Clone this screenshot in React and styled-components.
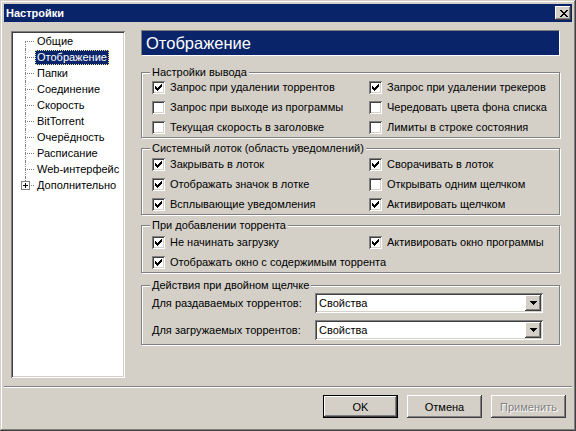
import React from 'react';
import styled, { createGlobalStyle } from 'styled-components';

const GlobalStyle = createGlobalStyle`
    html, body {
        margin: 0;
        padding: 0;
        background: #D4D0C8;
    }
    body {
        font-family: "Liberation Sans", Arial, sans-serif;
        font-size: 11px;
        color: #000;
    }
`;

const Window = styled.div`
    width: 576px;
    height: 431px;
    box-sizing: border-box;
    padding: 4px;
    background: #D4D0C8;
    box-shadow: inset -1px -1px 0 #404040, inset 1px 1px 0 #D4D0C8,
        inset -2px -2px 0 #808080, inset 2px 2px 0 #fff;
    display: flex;
    flex-direction: column;
`;

const TitleBar = styled.div`
    height: 18px;
    background: #0A246A;
    display: flex;
    align-items: center;
    justify-content: space-between;
    padding: 0 1px 0 2px;
    color: #fff;
    font-weight: bold;
    font-size: 11px;
`;

const RaisedBox = styled.div`
    background: #D4D0C8;
    box-shadow: inset -1px -1px 0 #404040, inset 1px 1px 0 #fff,
        inset -2px -2px 0 #808080, inset 2px 2px 0 #D4D0C8;
    display: flex;
    align-items: center;
    justify-content: center;
`;

const CloseButton = styled(RaisedBox)`
    width: 16px;
    height: 14px;
    box-sizing: border-box;
    padding-left: 1px;
`;

const Body = styled.div`
    height: 356px;
    box-sizing: border-box;
    padding: 8px 0 0 7px;
    display: flex;
    align-items: flex-start;
`;

const Tree = styled.div`
    margin-top: 1px;
    width: 114px;
    height: 347px;
    box-sizing: border-box;
    padding: 2px;
    background: #fff;
    box-shadow: inset 1px 1px 0 #808080, inset -1px -1px 0 #fff,
        inset 2px 2px 0 #404040, inset -2px -2px 0 #D4D0C8;
`;

const TreeRow = styled.div`
    display: flex;
    align-items: center;
    height: 16px;
`;

const Connector = styled.span`
    position: relative;
    width: 22px;
    height: 16px;
    flex: none;

    &::before {
        content: '';
        position: absolute;
        left: 12px;
        top: 8px;
        width: 9px;
        border-top: 1px dotted #808080;
    }

    &::after {
        content: '';
        position: absolute;
        left: 12px;
        top: ${p => (p.$first ? '8px' : '0')};
        height: ${p => (p.$last ? '4px' : p.$first ? '8px' : '16px')};
        border-left: 1px dotted #808080;
    }
`;

const Expander = styled.span`
    position: absolute;
    left: 8px;
    top: 4px;
    width: 9px;
    height: 9px;
    box-sizing: border-box;
    border: 1px solid #808080;
    background: #fff;
    z-index: 1;

    &::before {
        content: '';
        position: absolute;
        left: 1px;
        top: 3px;
        width: 5px;
        height: 1px;
        background: #000;
    }

    &::after {
        content: '';
        position: absolute;
        left: 3px;
        top: 1px;
        width: 1px;
        height: 5px;
        background: #000;
    }
`;

const TreeLabel = styled.span`
    height: 15px;
    line-height: 13px;
    box-sizing: border-box;
    padding: 0 1px;
    border: 1px ${p => (p.$selected ? 'dotted #E8E4A0' : 'solid transparent')};
    background: ${p => (p.$selected ? '#0A246A' : 'transparent')};
    color: ${p => (p.$selected ? '#fff' : '#000')};
    white-space: nowrap;
`;

const Panel = styled.div`
    margin-left: 16px;
    width: 419px;
    display: flex;
    flex-direction: column;
`;

const Header = styled.div`
    height: 26px;
    box-sizing: border-box;
    background: #0A246A;
    border-top: 1px solid #808080;
    border-left: 1px solid #808080;
    border-right: 1px solid #fff;
    border-bottom: 1px solid #fff;
    color: #fff;
    font-size: 16.5px;
    line-height: 24px;
    padding-left: 4px;
`;

const Group = styled.div`
    position: relative;
    margin-top: ${p => p.$mt}px;
    border: 1px solid #808080;
    box-shadow: inset 1px 1px 0 #fff, 1px 1px 0 #fff;
    padding: ${p => p.$pt}px 0 ${p => p.$pb || 0}px 10px;
`;

const Legend = styled.span`
    position: absolute;
    top: -7px;
    left: 8px;
    padding: 0 2px;
    line-height: 13px;
    background: #D4D0C8;
`;

const CheckGrid = styled.div`
    display: grid;
    grid-template-columns: 217px 1fr;
    grid-auto-rows: 20px;
`;

const CheckItem = styled.label`
    display: flex;
    align-items: center;
    gap: 5px;
    white-space: nowrap;
    grid-column: ${p => (p.$wide ? '1 / -1' : 'auto')};
`;

const Box = styled.span`
    width: 13px;
    height: 13px;
    box-sizing: border-box;
    flex: none;
    background: #fff;
    box-shadow: inset 1px 1px 0 #808080, inset -1px -1px 0 #fff,
        inset 2px 2px 0 #404040, inset -2px -2px 0 #D4D0C8;
    display: flex;
    align-items: center;
    justify-content: center;
`;

const ComboRow = styled.div`
    display: flex;
    align-items: center;
    height: 20px;
    margin-top: ${p => (p.$next ? '7px' : '0')};
`;

const ComboLabel = styled.span`
    width: 163px;
    flex: none;
`;

const Combo = styled.div`
    width: 228px;
    height: 20px;
    box-sizing: border-box;
    padding: 2px;
    background: #fff;
    box-shadow: inset 1px 1px 0 #808080, inset -1px -1px 0 #fff,
        inset 2px 2px 0 #404040, inset -2px -2px 0 #D4D0C8;
    display: flex;
    align-items: center;
    justify-content: space-between;
`;

const ComboText = styled.span`
    padding-left: 2px;
    line-height: 16px;
`;

const ComboButton = styled(RaisedBox)`
    width: 16px;
    height: 16px;
`;

const Separator = styled.div`
    margin-top: 8px;
    border-top: 1px solid #808080;
    border-bottom: 1px solid #fff;
`;

const Footer = styled.div`
    display: flex;
    justify-content: flex-end;
    gap: 9px;
    padding: 7px 6px 0 0;
`;

const Button = styled(RaisedBox)`
    width: 75px;
    height: 23px;
    box-sizing: border-box;
    font-size: 11px;
    color: ${p => (p.$disabled ? '#808080' : '#000')};
    text-shadow: ${p => (p.$disabled ? '1px 1px 0 #fff' : 'none')};
    ${p => p.$default && `
        border: 1px solid #000;
    `}
`;

const CheckMark = () => (
    <svg width="7" height="7" viewBox="0 0 7 7" shapeRendering="crispEdges">
        <path d="M6 0h1v1h-1zM5 1h2v1h-2zM0 2h1v1h-1zM4 2h3v1h-3zM0 3h2v1h-2zM3 3h3v1h-3zM0 4h5v1h-5zM1 5h3v1h-3zM2 6h1v1h-1z" fill="#000" />
    </svg>
);

const CloseGlyph = () => (
    <svg width="8" height="7" viewBox="0 0 8 7" shapeRendering="crispEdges">
        <path d="M0 0h2v1h-2zM6 0h2v1h-2zM1 1h2v1h-2zM5 1h2v1h-2zM2 2h4v1h-4zM3 3h2v1h-2zM2 4h4v1h-4zM1 5h2v1h-2zM5 5h2v1h-2zM0 6h2v1h-2zM6 6h2v1h-2z" fill="#000" />
    </svg>
);

const Arrow = () => (
    <svg width="7" height="4" viewBox="0 0 7 4" shapeRendering="crispEdges">
        <path d="M0 0h7v1h-7zM1 1h5v1h-5zM2 2h3v1h-3zM3 3h1v1h-1z" fill="#000" />
    </svg>
);

const Check = ({ checked, wide, children }) => (
    <CheckItem $wide={wide}>
        <Box>{checked && <CheckMark />}</Box>
        {children}
    </CheckItem>
);

const treeItems = [
    'Общие',
    'Отображение',
    'Папки',
    'Соединение',
    'Скорость',
    'BitTorrent',
    'Очерёдность',
    'Расписание',
    'Web-интерфейс',
    'Дополнительно',
];

const ComboBox = ({ value }) => (
    <Combo>
        <ComboText>{value}</ComboText>
        <ComboButton><Arrow /></ComboButton>
    </Combo>
);

export default function App() {
    return (
        <>
            <GlobalStyle />
            <Window>
                <TitleBar>
                    <span>Настройки</span>
                    <CloseButton><CloseGlyph /></CloseButton>
                </TitleBar>
                <Body>
                    <Tree>
                        {treeItems.map((name, i) => {
                            const last = i === treeItems.length - 1;
                            return (
                                <TreeRow key={name}>
                                    <Connector $first={i === 0} $last={last}>
                                        {last && <Expander />}
                                    </Connector>
                                    <TreeLabel $selected={i === 1}>{name}</TreeLabel>
                                </TreeRow>
                            );
                        })}
                    </Tree>
                    <Panel>
                        <Header>Отображение</Header>
                        <Group $mt={16} $pt={4}>
                            <Legend>Настройки вывода</Legend>
                            <CheckGrid>
                                <Check checked>Запрос при удалении торрентов</Check>
                                <Check checked>Запрос при удалении трекеров</Check>
                                <Check>Запрос при выходе из программы</Check>
                                <Check>Чередовать цвета фона списка</Check>
                                <Check>Текущая скорость в заголовке</Check>
                                <Check>Лимиты в строке состояния</Check>
                            </CheckGrid>
                        </Group>
                        <Group $mt={10} $pt={5}>
                            <Legend>Системный лоток (область уведомлений)</Legend>
                            <CheckGrid>
                                <Check checked>Закрывать в лоток</Check>
                                <Check checked>Сворачивать в лоток</Check>
                                <Check checked>Отображать значок в лотке</Check>
                                <Check>Открывать одним щелчком</Check>
                                <Check checked>Всплывающие уведомления</Check>
                                <Check checked>Активировать щелчком</Check>
                            </CheckGrid>
                        </Group>
                        <Group $mt={10} $pt={6}>
                            <Legend>При добавлении торрента</Legend>
                            <CheckGrid>
                                <Check checked>Не начинать загрузку</Check>
                                <Check checked>Активировать окно программы</Check>
                                <Check checked wide>Отображать окно с содержимым торрента</Check>
                            </CheckGrid>
                        </Group>
                        <Group $mt={12} $pt={7} $pb={4}>
                            <Legend>Действия при двойном щелчке</Legend>
                            <ComboRow>
                                <ComboLabel>Для раздаваемых торрентов:</ComboLabel>
                                <ComboBox value="Свойства" />
                            </ComboRow>
                            <ComboRow $next>
                                <ComboLabel>Для загружаемых торрентов:</ComboLabel>
                                <ComboBox value="Свойства" />
                            </ComboRow>
                        </Group>
                    </Panel>
                </Body>
                <Separator />
                <Footer>
                    <Button $default>OK</Button>
                    <Button>Отмена</Button>
                    <Button $disabled>Применить</Button>
                </Footer>
            </Window>
        </>
    );
}
